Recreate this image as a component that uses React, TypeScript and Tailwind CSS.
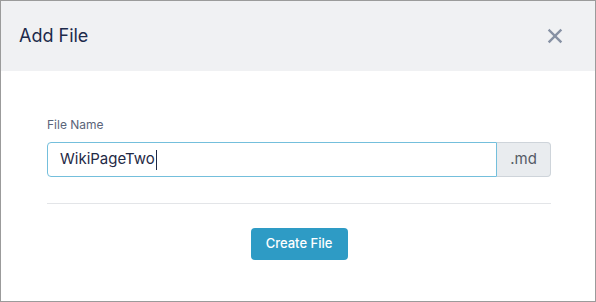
import { X } from "lucide-react";

export default function App() {
  return (
    <div className="w-[596px] h-[302px] border border-[#9b9b9b] bg-white flex flex-col" style={{ fontFamily: "Inter, 'Noto Sans', sans-serif" }}>
      {/* Header */}
      <div className="h-[70px] bg-[#f0f1f3] flex items-center justify-between pl-[18px] pr-[29px]">
        <h2 className="text-[18px] text-[#1d2a4b] leading-none">Add File</h2>
        <button className="text-[#8690a3] flex" aria-label="Close">
          <X size={22} strokeWidth={2.6} strokeLinecap="square" />
        </button>
      </div>

      {/* Body */}
      <div className="pl-[46px] pr-[44px] pt-[46px]">
        <label className="block text-[12px] text-[#5b6479] leading-[16px]">File Name</label>
        <div className="mt-[9px] flex h-[35px]">
          <div className="flex-1 border border-[#74bfdc] rounded-l-[4px] flex items-center pl-[12px] text-[15px] text-[#1f2a46]">
            WikiPageTwo<span className="w-px h-[20px] bg-[#1f2a46] ml-px" />
          </div>
          <div className="w-[54px] bg-[#e9ecef] border border-l-0 border-[#ced4da] rounded-r-[4px] flex items-center justify-center text-[15px] text-[#555b66]">
            .md
          </div>
        </div>
        <div className="mt-[26px] border-t border-[#e3e5e8]" />
        <div className="mt-[24px] flex justify-center">
          <button className="w-[97px] h-[32px] bg-[#2e9bc5] rounded-[4px] text-white text-[13px] font-medium">
            Create File
          </button>
        </div>
      </div>
    </div>
  );
}
